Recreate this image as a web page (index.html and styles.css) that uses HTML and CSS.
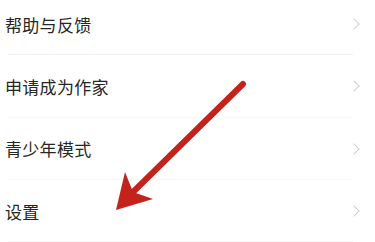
FILE: index.html
```html
<!DOCTYPE html>
<html lang="zh-CN">
<head>
    <meta charset="UTF-8">
    <meta name="viewport" content="width=device-width, initial-scale=1.0">
    <title>设置</title>
    <link rel="stylesheet" href="styles.css">
</head>
<body>
    <main class="page">
        <ul class="menu-list">
            <li class="menu-item"><span class="menu-label">帮助与反馈</span><span class="chevron"></span></li>
            <li class="menu-item"><span class="menu-label">申请成为作家</span><span class="chevron"></span></li>
            <li class="menu-item"><span class="menu-label">青少年模式</span><span class="chevron"></span></li>
            <li class="menu-item"><span class="menu-label">设置</span><span class="chevron"></span></li>
        </ul>

        <svg class="pointer-arrow" width="375" height="242" viewBox="0 0 375 242">
            <line x1="243" y1="84" x2="132" y2="193" stroke="#c4231c" stroke-width="6" stroke-linecap="round"/>
            <polygon points="116,210 125,172 133,192 153,199" fill="#c4231c"/>
        </svg>
    </main>
</body>
</html>
```

FILE: styles.css
```css
body { margin: 0; background-color: #fff; font-family: "Noto Sans CJK SC", "Noto Sans", sans-serif; color: #262626; }
.page { position: relative; width: 375px; height: 242px; overflow: hidden; }
.menu-list { list-style: none; margin: -7px 0 0 0; padding: 0; }
.menu-item { display: flex; align-items: center; justify-content: space-between; height: 62.3px; padding: 0 15px 0 5px; position: relative; }
.menu-item::after { content: ""; position: absolute; left: 8px; right: 22px; bottom: 0; height: 1px; background-color: #f8f8f8; }
.menu-item:first-child::after { background-color: #f0f0f0; }
.menu-label { font-size: 17px; letter-spacing: 0.3px; }
.chevron { width: 7px; height: 7px; border-top: 1.2px solid #d0d0d0; border-right: 1.2px solid #d0d0d0; transform: rotate(45deg); margin-right: 2px; }
.pointer-arrow { position: absolute; top: 0; left: 0; pointer-events: none; }
```
